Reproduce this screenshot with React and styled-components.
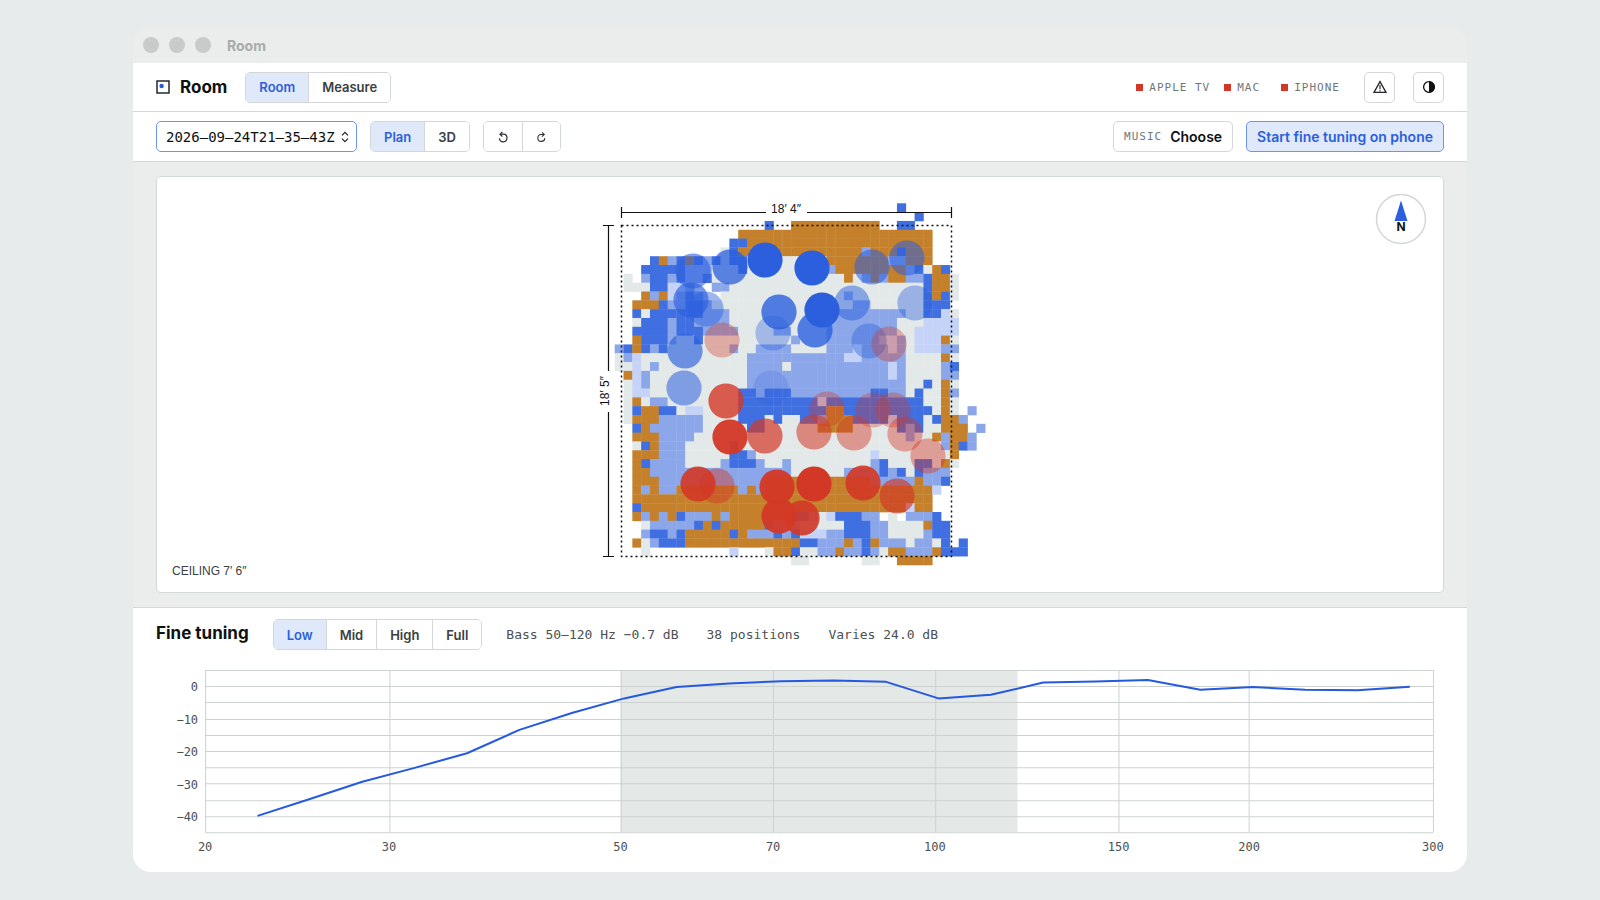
import React, { useState } from "react";
import styled, { createGlobalStyle } from "styled-components";

const SANS = `Inter, "Liberation Sans", sans-serif`;
const MONO = `"DejaVu Sans Mono", "Liberation Mono", monospace`;
const PLAIN = `"Liberation Sans", Arial, sans-serif`;

const CELL = 8.82;
const CELL_COLORS = {
  b: "#3f6fe0",
  l: "#8ba7ea",
  p: "#c4d3f7",
  g: "#e3e8e8",
  o: "#c4802a",
};

// one string per floor row, "from-to" columns followed by the surface kind
const FLOOR = [
  "32b",
  "34b",
  "17b 20-29o 32-33b",
  "14-35o",
  "13-14b 15-35o",
  "12g 13b 14-27o 28l 29-31o 32b 33-35o",
  "4b 5o 6l 7b 8o 9b 10l 11b 12g 13-14b 15-23g 24-30o 31-32l 33-35o",
  "3-7b 8-10l 11-13g 14b 15-23g 24l 25-32o 33l 34b 35g 36o 37b",
  "1g 3l 4-5b 6l 7b 8-9l 10b 11-25g 26o 27g 28l 29o 30l 31-32o 33-34l 35b 36-37o 38g",
  "1-3g 4-5b 6-7p 8l 11-12l 13-34g 35b 36-37o 38g",
  "3o 4l 5o 6p 7l 8b 9l 12-25g 26l 27-34g 35b 36o 37b 38g",
  "2-4o 5b 6-7l 8-9b 10l 11-26g 27-28l 29-34g 35-37b",
  "2b 3g 4-9b 10-12l 13-23g 24-32l 33-34g 35-36b 37p 38g",
  "2g 3-5b 6l 7-8b 9-12l 13-23g 24-31l 32-34g 35-38p",
  "2-5b 6l 7-9b 10-13l 14-17g 18-19l 20-23g 24-31l 32-33g 34-38p",
  "2o 3-5b 6l 7-8g 9b 10-19g 20l 21-23g 24-29l 30-31p 32l 33g 34-36p 37o 38g",
  "0l 1b 2o 3b 4l 5b 6-12g 13l 14-15g 16-19l 20-23g 24-26l 27p 28-30l 31p 32l 33g 34-36p 37-38l",
  "0g 1l 2p 3-14g 15-25l 26-27p 28-32l 33-36g 37o 38g",
  "0-1g 2p 3g 4l 5-14g 15-18l 19g 20-30l 31p 32l 33-36g 37l 38b",
  "1o 2p 3l 4-14g 15-30l 31p 32l 33-36g 37-38l",
  "1g 2p 3l 4-14g 15-32l 33-34g 35b 36g 37o 38g",
  "1g 2-3p 4-13g 14-15b 16l 17-19b 20-28l 29-30b 31-32l 33g 34b 35-36g 37o 38l",
  "1g 2o 3g 4-5l 6-13g 14-22b 23p 24-34b 35-36g 37o 38g",
  "1g 2b 3-4o 5-6b 7g 8-9p 10-13g 14-23b 24-25o 26-35b 36g 37o 38g 40l",
  "1g 2-4o 5-9l 10-13g 14-16b 17g 18b 19-20g 21-22b 23l 24-26o 27-30b 31p 32-34b 35g 36b 37-38o 39l",
  "2b 3o 4-9l 10-14g 15-16b 17-22g 23-26o 27-31g 32b 33l 34b 35-36g 37-39o 41l",
  "2-4o 5-8l 9-32g 33l 34-35g 36o 37l 38-39o 40l",
  "2g 3b 4o 5-7l 8-12g 13b 14-36g 37l 38o 39b 40l",
  "2-4o 5-7l 8-12g 13-14b 15l 16-28g 29p 30-37g 38o",
  "2o 3b 4-7l 8-11g 12l 13-15b 16l 17-18g 19l 20-28g 29l 30b 31-33g 34-35b 36g 37o 38g",
  "2-3o 4-19l 20-25g 26-29l 30b 31l 32b 33g 34b 35-37l",
  "2-4o 5-16l 17-28o 29-33l 34o 35-36l 37b",
  "2o 3l 4o 5-6l 7-13o 14l 15o 16l 17-35o 36p",
  "2-35o",
  "2b 3-32o 33p 34-35o",
  "2o 3l 4o 5l 6o 7b 8-10l 11o 12l 13-19o 20-21b 22l 23g 24p 25-27b 28-29l 31g 33-35l 36b",
  "3g 4-8l 9b 10o 11b 12-16o 17b 18-20l 21-22p 23-25g 26-28b 29-30l 31-34g 35o 36-37b",
  "3l 4-5b 6l 7b 8-12o 13b 14o 15-17l 18b 19l 20b 21-23p 24-25l 26-28b 29-30l 31-34g 35l 36-37b",
  "2o 3g 4l 5-7b 8-20o 21-22b 23-25l 26o 27l 28b 29o 30-32l 33g 34-35l 36g 37b 39b",
  "3g 13p 17g 18-19o 20b 21-22g 23-24l 25o 26-27l 28b 29l 30g 31-32o 33-35l 36o 37-39b",
  "20-21g 28-29g 32-35o",
];

// x, y, opacity
const QUIET = [
  [93, 94, 0.6],
  [130, 90, 0.75],
  [165, 83, 1],
  [212, 91, 1],
  [272, 90, 0.55],
  [307, 81, 0.55],
  [91, 123, 0.65],
  [106, 132, 0.45],
  [179, 135, 0.8],
  [173, 156, 0.35],
  [85, 174, 0.65],
  [84, 211, 0.55],
  [222, 133, 1],
  [215, 153, 0.8],
  [252, 126, 0.5],
  [315, 126, 0.4],
  [269, 164, 0.4],
  [171, 211, 0.2],
];

const LOUD = [
  [122, 163, 0.35],
  [289, 167, 0.35],
  [126, 224, 0.8],
  [130, 260, 0.95],
  [165, 259, 0.7],
  [98, 307, 0.9],
  [117, 309, 0.45],
  [177, 310, 0.95],
  [179, 339, 0.95],
  [227, 232, 0.35],
  [214, 255, 0.55],
  [254, 256, 0.45],
  [273, 233, 0.32],
  [293, 233, 0.35],
  [305, 257, 0.42],
  [328, 279, 0.42],
  [214, 307, 1],
  [263, 306, 0.9],
  [297, 319, 0.65],
  [202, 341, 0.9],
];

const RESPONSE = [
  -39.8, -34.6, -29.3, -25, -20.5, -13.3, -8.1, -3.6, -0.1, 1, 1.7, 1.9, 1.5,
  -3.6, -2.5, 1.3, 1.6, 2.1, -0.9, -0.1, -0.9, -1.1, 0,
];

const PLOT = { left: 49, right: 1275, top: 2, bottom: 164 };

const freqX = (f) =>
  PLOT.left +
  (Math.log(f / 20) / Math.log(300 / 20)) * (PLOT.right - PLOT.left);
const dbY = (db) => PLOT.top + ((5 - db) / 50) * (PLOT.bottom - PLOT.top);

const parseRow = (row) =>
  row.split(" ").flatMap((token) => {
    const [, from, to, kind] = token.match(/^(\d+)(?:-(\d+))?([a-z])$/);
    const cells = [];
    for (let c = Number(from); c <= Number(to || from); c++) {
      cells.push({ c, kind });
    }
    return cells;
  });

const Segmented = ({ label, options, value, onChange }) => (
  <Segments role="group" aria-label={label}>
    {options.map((option) => (
      <Segment
        key={option}
        type="button"
        $active={option === value}
        aria-pressed={option === value}
        onClick={() => onChange(option)}
      >
        {option}
      </Segment>
    ))}
  </Segments>
);

const RotateIcon = ({ flip }) => (
  <svg width="12" height="14" viewBox="0 0 12 14" aria-hidden="true">
    <g
      transform={flip ? "translate(12 0) scale(-1 1)" : undefined}
      fill="none"
      stroke="#2c3133"
      strokeWidth="1.2"
    >
      <path d="M3.4 4.2H6.4A3.8 3.8 0 1 1 2.4 8.2" />
      <path d="M5.4 1.9 3 4.2 5.4 6.5" />
    </g>
  </svg>
);

const FloorPlan = () => (
  <PlanSvg viewBox="-20 0 440 415" role="img" aria-label="Floor plan">
    {/* cells overlap a little so only a faint seam shows between them */}
    {FLOOR.map((row, r) =>
      parseRow(row).map(({ c, kind }) => (
        <rect
          key={`${r}-${c}`}
          x={14.7 + c * CELL}
          y={26.3 + r * CELL}
          width={CELL + 0.35}
          height={CELL + 0.35}
          fill={CELL_COLORS[kind]}
        />
      ))
    )}
    {QUIET.map(([x, y, o]) => (
      <circle key={`${x}-${y}`} cx={x} cy={y} r="17.6" fill="#2b5fdd" opacity={o} />
    ))}
    {LOUD.map(([x, y, o]) => (
      <circle key={`${x}-${y}`} cx={x} cy={y} r="17.6" fill="#d33826" opacity={o} />
    ))}
    <rect
      x="21.5"
      y="48.5"
      width="330"
      height="331"
      fill="none"
      stroke="#111"
      strokeWidth="1.5"
      strokeDasharray="2 3"
    />
    <path
      d="M21.5 30V41M21.5 35.5H166M207 35.5H351.5M351.5 30V41M3 48.5H14M8.5 48.5V194M8.5 235V379.5M3 379.5H14"
      fill="none"
      stroke="#111"
      strokeWidth="1.2"
    />
    <PlanText x="186" y="36">
      18′ 4″
    </PlanText>
    <PlanText transform="translate(9 214) rotate(-90)">18′ 5″</PlanText>
  </PlanSvg>
);

const ResponseChart = () => (
  <ChartSvg viewBox="0 0 1286 190" role="img" aria-label="Frequency response">
    <rect
      x={freqX(50)}
      y={PLOT.top}
      width={freqX(120) - freqX(50)}
      height={PLOT.bottom - PLOT.top}
      fill="#e4e8e7"
    />
    <g stroke="#cdd2d1">
      {[5, 0, -5, -10, -15, -20, -25, -30, -35, -40, -45].map((db) => {
        const y = Math.round(dbY(db)) + 0.5;
        return <line key={db} x1={PLOT.left} x2={PLOT.right} y1={y} y2={y} />;
      })}
      {[20, 30, 50, 70, 100, 150, 200, 300].map((f) => {
        const x = Math.round(freqX(f)) + 0.5;
        return <line key={f} x1={x} x2={x} y1={PLOT.top} y2={PLOT.bottom} />;
      })}
    </g>
    <polyline
      points={RESPONSE.map(
        (db, i) => `${freqX(22.45 * 2 ** (i / 6))},${dbY(db) + 0.5}`
      ).join(" ")}
      fill="none"
      stroke="#2459e0"
      strokeWidth="2"
      strokeLinejoin="round"
    />
    {[0, -10, -20, -30, -40].map((db) => (
      <AxisText key={db} x="42" y={dbY(db) + 5} textAnchor="end">
        {String(db).replace("-", "−")}
      </AxisText>
    ))}
    {[20, 30, 50, 70, 100, 150, 200, 300].map((f) => (
      <AxisText key={f} x={freqX(f)} y="183" textAnchor="middle">
        {f}
      </AxisText>
    ))}
  </ChartSvg>
);

const App = () => {
  const [page, setPage] = useState("Room");
  const [view, setView] = useState("Plan");
  const [band, setBand] = useState("Low");

  return (
    <>
      <GlobalStyle />
      <Page>
        <AppWindow>
          <TitleBar>
            <Light />
            <Light />
            <Light />
            <WindowTitle>Room</WindowTitle>
          </TitleBar>

          <Header>
            <Brand>
              <svg width="14" height="14" viewBox="0 0 14 14" aria-hidden="true">
                <rect x="1" y="1" width="12" height="12" fill="#fff" stroke="#25292b" strokeWidth="1.5" />
                <circle cx="5.6" cy="6" r="2.2" fill="#2459e0" />
              </svg>
              <BrandName>Room</BrandName>
            </Brand>
            <Segmented
              label="Page"
              options={["Room", "Measure"]}
              value={page}
              onChange={setPage}
            />
            <Spacer />
            <StatusList>
              <Status>Apple TV</Status>
              <Status>Mac</Status>
              <Status>iPhone</Status>
            </StatusList>
            <IconButtons>
              <IconButton type="button" aria-label="Warnings">
                <svg width="14" height="14" viewBox="0 0 14 14" aria-hidden="true">
                  <path d="M7 1.6 13 12.4H1Z" fill="none" stroke="#25292b" strokeWidth="1.3" />
                  <path d="M7 5V9.2M7 10.2V11.4" stroke="#25292b" strokeWidth="1.2" />
                </svg>
              </IconButton>
              <IconButton type="button" aria-label="Contrast">
                <svg width="14" height="14" viewBox="0 0 14 14" aria-hidden="true">
                  <circle cx="7" cy="7" r="5.4" fill="#fff" stroke="#111" strokeWidth="1.3" />
                  <path d="M7 1.2A5.8 5.8 0 0 1 7 12.8Z" fill="#111" />
                </svg>
              </IconButton>
            </IconButtons>
          </Header>

          <Toolbar>
            <SelectWrapper>
              <ScanSelect aria-label="Scan" defaultValue="scan">
                <option value="scan">2026–09–24T21–35–43Z</option>
              </ScanSelect>
              <SelectArrows width="8" height="12" viewBox="0 0 8 12" aria-hidden="true">
                <path
                  d="M1 4.4 4 1.4 7 4.4M1 7.6 4 10.6 7 7.6"
                  fill="none"
                  stroke="#25292b"
                  strokeWidth="1.3"
                />
              </SelectArrows>
            </SelectWrapper>
            <Segmented
              label="View"
              options={["Plan", "3D"]}
              value={view}
              onChange={setView}
            />
            <Segments role="group" aria-label="Rotate">
              <RotateButton type="button" aria-label="Rotate left">
                <RotateIcon />
              </RotateButton>
              <RotateButton type="button" aria-label="Rotate right">
                <RotateIcon flip />
              </RotateButton>
            </Segments>
            <Spacer />
            <MusicButton type="button">
              <MusicLabel>Music</MusicLabel>
              Choose
            </MusicButton>
            <PrimaryButton type="button">Start fine tuning on phone</PrimaryButton>
          </Toolbar>

          <Stage>
            <PlanCard>
              <FloorPlan />
              <Compass width="52" height="52" viewBox="0 0 52 52" role="img" aria-label="North">
                <circle cx="26" cy="26" r="24.5" fill="#fff" stroke="#d2d7d7" strokeWidth="1.5" />
                <path d="M26 7.5 32.5 28H19.5Z" fill="#2b5fdd" />
                <CompassText x="26" y="38">
                  N
                </CompassText>
              </Compass>
              <Ceiling>CEILING 7′ 6″</Ceiling>
            </PlanCard>
          </Stage>

          <Panel>
            <PanelHeader>
              <PanelTitle>Fine tuning</PanelTitle>
              <Segmented
                label="Band"
                options={["Low", "Mid", "High", "Full"]}
                value={band}
                onChange={setBand}
              />
              <Readout>
                <span>Bass 50–120 Hz −0.7 dB</span>
                <span>38 positions</span>
                <span>Varies 24.0 dB</span>
              </Readout>
            </PanelHeader>
            <ResponseChart />
          </Panel>
        </AppWindow>
      </Page>
    </>
  );
};

export default App;

const GlobalStyle = createGlobalStyle`
  * {
    box-sizing: border-box;
  }

  body {
    margin: 0;
    background: #e7ebec;
    color: #0e1112;
    font-family: ${SANS};
  }

  button, select {
    font: inherit;
    color: inherit;
  }
`;

const Page = styled.div`
  padding: 27px 133px;
`;

const AppWindow = styled.main`
  border-radius: 18px;
  overflow: hidden;
  background: #ebedec;
`;

const TitleBar = styled.div`
  display: flex;
  align-items: center;
  gap: 10px;
  height: 36px;
  padding: 0 10px;
`;

const Light = styled.span`
  width: 16px;
  height: 16px;
  border-radius: 50%;
  background: #c9cbca;
`;

const WindowTitle = styled.span`
  margin-left: 6px;
  font-size: 14px;
  font-weight: 700;
  color: #a9abaa;
`;

const Header = styled.header`
  display: flex;
  align-items: center;
  height: 49px;
  padding: 0 23px;
  background: #fff;
  border-bottom: 1px solid #d2d7d7;
`;

const Brand = styled.div`
  display: flex;
  align-items: center;
  gap: 10px;
  margin-right: 18px;
`;

const BrandName = styled.h1`
  margin: 0;
  font-size: 17px;
  font-weight: 700;
`;

const Spacer = styled.div`
  flex: 1;
`;

const Segments = styled.div`
  display: flex;
  height: 31px;
  border: 1px solid #d2d7d7;
  border-radius: 5px;
  overflow: hidden;
`;

const Segment = styled.button`
  padding: 0 13px;
  border: 0;
  background: ${(p) => (p.$active ? "#e0e9f9" : "#fff")};
  color: ${(p) => (p.$active ? "#2b5fdd" : "#3a4042")};
  font-size: 13px;
  font-weight: 600;

  & + & {
    border-left: 1px solid #d2d7d7;
  }
`;

const RotateButton = styled(Segment)`
  display: flex;
  align-items: center;
  justify-content: center;
  width: 38px;
`;

const StatusList = styled.div`
  display: flex;
  gap: 14px;
`;

const Status = styled.span`
  display: flex;
  align-items: center;
  gap: 6px;
  min-width: 43px;
  font-family: ${MONO};
  font-size: 11px;
  letter-spacing: 1px;
  text-transform: uppercase;
  color: #6f7678;

  &::before {
    content: "";
    width: 7px;
    height: 7px;
    background: #d33826;
  }
`;

const IconButtons = styled.div`
  display: flex;
  gap: 18px;
  margin-left: 24px;
`;

const IconButton = styled.button`
  display: flex;
  align-items: center;
  justify-content: center;
  width: 31px;
  height: 31px;
  padding: 0;
  border: 1px solid #d2d7d7;
  border-radius: 5px;
  background: #fff;
`;

const Toolbar = styled.div`
  display: flex;
  align-items: center;
  gap: 13px;
  height: 50px;
  padding: 0 23px;
  background: #fff;
  border-bottom: 1px solid #d2d7d7;
`;

const SelectWrapper = styled.div`
  position: relative;
  display: flex;
  align-items: center;
`;

const ScanSelect = styled.select`
  appearance: none;
  width: 201px;
  height: 31px;
  padding: 0 16px 0 9px;
  border: 1px solid #6d93ee;
  border-radius: 5px;
  background: #fff;
  font-family: ${MONO};
  font-size: 14px;
`;

const SelectArrows = styled.svg`
  position: absolute;
  right: 8px;
  pointer-events: none;
`;

const MusicButton = styled.button`
  display: flex;
  align-items: center;
  gap: 8px;
  height: 31px;
  padding: 0 10px;
  border: 1px solid #d2d7d7;
  border-radius: 5px;
  background: #fff;
  font-size: 14px;
  font-weight: 600;
`;

const MusicLabel = styled.span`
  font-family: ${MONO};
  font-size: 11px;
  font-weight: 400;
  letter-spacing: 1px;
  text-transform: uppercase;
  color: #6f7678;
`;

const PrimaryButton = styled.button`
  height: 31px;
  padding: 0 10px;
  border: 1px solid #6d93ee;
  border-radius: 5px;
  background: #e0e9f9;
  color: #2b5fdd;
  font-size: 14px;
  font-weight: 600;
`;

const Stage = styled.section`
  padding: 14px 23px;
`;

const PlanCard = styled.div`
  position: relative;
  display: flex;
  justify-content: center;
  border: 1px solid #d2d7d7;
  border-radius: 5px;
  background: #fff;
`;

const PlanSvg = styled.svg`
  display: block;
  height: 415px;
`;

const PlanText = styled.text`
  font-family: ${PLAIN};
  font-size: 12px;
  text-anchor: middle;
  fill: #111;
`;

const Compass = styled.svg`
  position: absolute;
  top: 16px;
  right: 16px;
`;

const CompassText = styled.text`
  font-family: ${SANS};
  font-size: 12px;
  font-weight: 700;
  text-anchor: middle;
  fill: #111;
`;

const Ceiling = styled.span`
  position: absolute;
  left: 15px;
  bottom: 14px;
  font-family: ${PLAIN};
  font-size: 12px;
  color: #3a4042;
`;

const Panel = styled.section`
  padding: 11px 23px 14px;
  background: #fff;
  border-top: 1px solid #d2d7d7;
`;

const PanelHeader = styled.div`
  display: flex;
  align-items: center;
  gap: 24px;
  margin-bottom: 18px;
`;

const PanelTitle = styled.h2`
  align-self: flex-start;
  margin: 0;
  font-size: 17px;
  font-weight: 700;
  line-height: 28px;
`;

const Readout = styled.div`
  display: flex;
  gap: 28px;
  font-family: ${MONO};
  font-size: 13px;
  color: #4a5153;
`;

const ChartSvg = styled.svg`
  display: block;
  width: 100%;
`;

const AxisText = styled.text`
  font-family: ${MONO};
  font-size: 12px;
  fill: #4a5153;
`;
